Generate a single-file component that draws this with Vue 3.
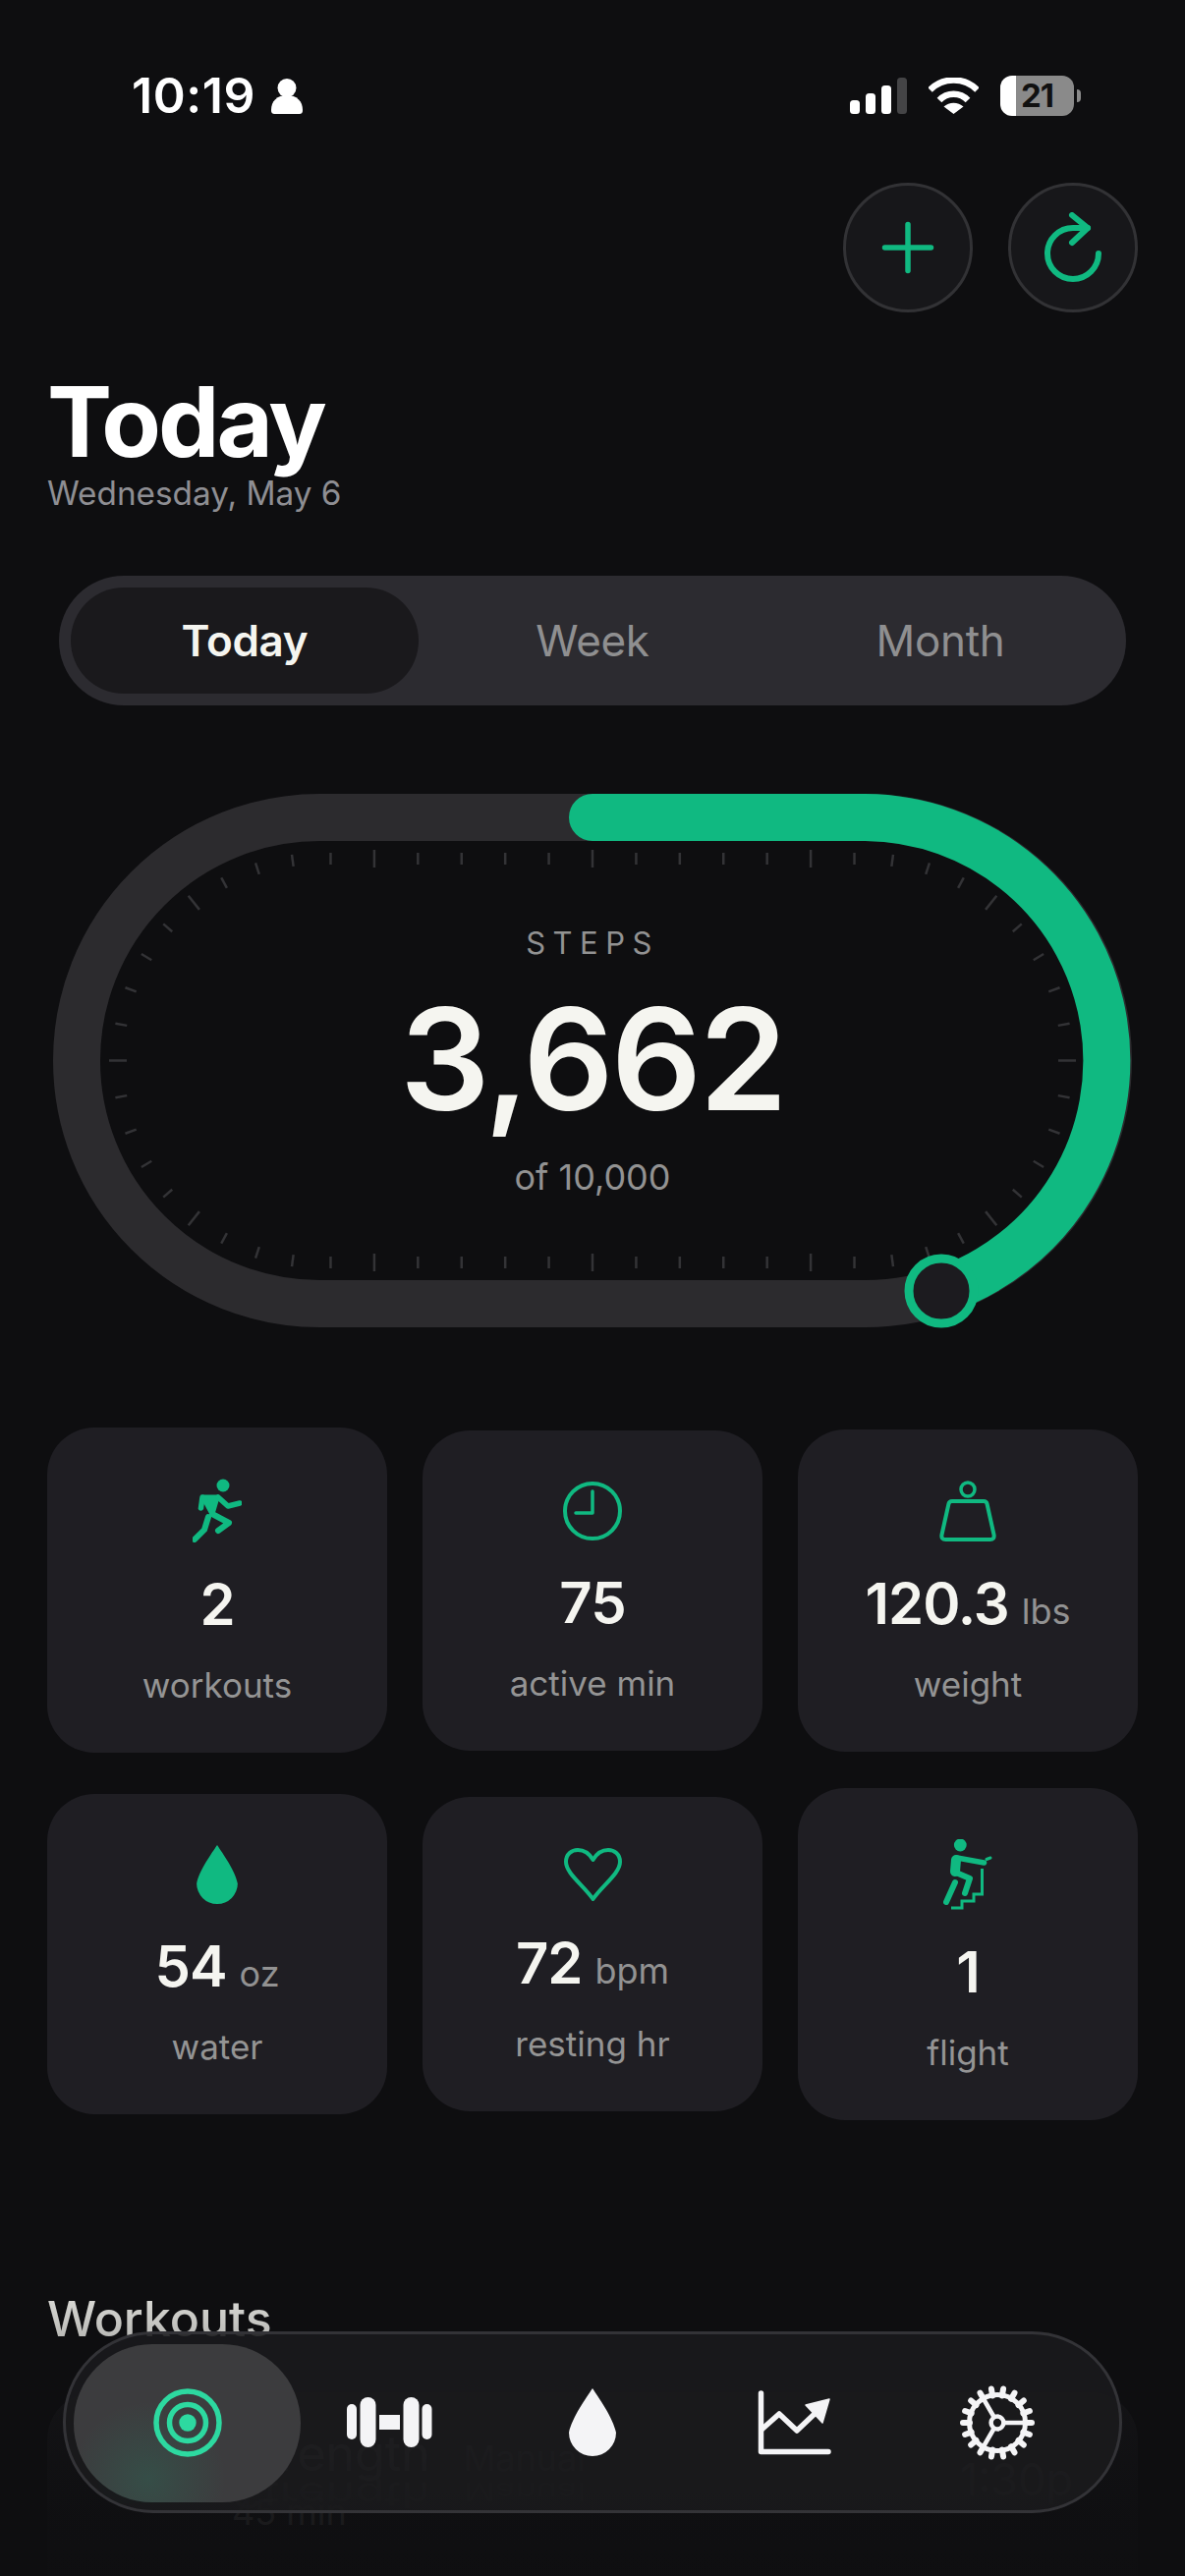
<script setup>
const ink = '#10b981'

// stat tiles; iconH differs per glyph so the tiles end up with different heights
const stats = [
  { icon: 'run', box: '36 5 50 65', w: 50, h: 65, value: '2', label: 'workouts' },
  { icon: 'clock', box: '0 0 60 60', w: 60, h: 60, value: '75', label: 'active min' },
  { icon: 'weight', box: '0 0 58 62', w: 58, h: 62, value: '120.3', unit: 'lbs', label: 'weight' },
  { icon: 'drop', box: '0 0 48 69', w: 42, h: 60, value: '54', unit: 'oz', label: 'water' },
  { icon: 'heart', box: '0 0 59 54', w: 59, h: 54, value: '72', unit: 'bpm', label: 'resting hr' },
  { icon: 'flight', box: '40 23 50 72', w: 50, h: 72, value: '1', label: 'flight' }
]

const tabs = ['Today', 'Week', 'Month']

const dropPath = 'M24 0C30 9 45 30 48 45A24 24 0 0 1 0 45C3 30 18 9 24 0Z'

// gauge is a pill: straight runs plus two half circles, 60 ticks spaced along the centre line
const cx1 = 325.5
const cx2 = 880.5
const cy = 289.5
const r = 247.5
const straight = cx2 - cx1
const perimeter = 2 * straight + 2 * Math.PI * r
const halfRun = straight / 2

function pointAt(s) {
  // s runs clockwise from the top centre
  s = s % perimeter
  if (s <= halfRun) return { x: 603 + s, y: cy - r, nx: 0, ny: 1 }
  s -= halfRun
  const arc = Math.PI * r
  if (s <= arc) {
    const a = s / r
    return { x: cx2 + r * Math.sin(a), y: cy - r * Math.cos(a), nx: -Math.sin(a), ny: Math.cos(a) }
  }
  s -= arc
  if (s <= straight) return { x: cx2 - s, y: cy + r, nx: 0, ny: -1 }
  s -= straight
  if (s <= arc) {
    const a = s / r
    return { x: cx1 - r * Math.sin(a), y: cy + r * Math.cos(a), nx: Math.sin(a), ny: -Math.cos(a) }
  }
  s -= arc
  return { x: cx1 + s, y: cy - r, nx: 0, ny: 1 }
}

const ticks = Array.from({ length: 60 }, (_, i) => {
  const p = pointAt((i * perimeter) / 60)
  const major = i % 5 === 0
  const half = major ? 9 : 6
  const mid = 42
  return {
    x1: p.x + p.nx * (mid - half),
    y1: p.y + p.ny * (mid - half),
    x2: p.x + p.nx * (mid + half),
    y2: p.y + p.ny * (mid + half),
    major
  }
})

const gearTeeth = Array.from({ length: 18 }, (_, i) => i * 20)
</script>

<template>
  <div class="page">
    <header class="status">
      <div class="status-left">
        <span class="clock">10:19</span>
        <svg width="32" height="36" viewBox="0 0 32 36">
          <circle cx="16" cy="9.5" r="9.5" fill="#fff" />
          <path d="M0 32c0-9 6-15 16-15s16 6 16 15c0 3-1 4-4 4H4c-3 0-4-1-4-4z" fill="#fff" />
        </svg>
      </div>
      <div class="status-right">
        <svg width="58" height="37" viewBox="0 0 58 37">
          <rect x="0" y="23" width="10" height="14" rx="3.5" fill="#fff" />
          <rect x="16" y="16" width="10" height="21" rx="3.5" fill="#fff" />
          <rect x="32" y="8" width="10" height="29" rx="3.5" fill="#fff" />
          <rect x="48" y="0" width="10" height="37" rx="3.5" fill="#444446" />
        </svg>
        <svg width="51" height="37" viewBox="0 0 51 37">
          <path d="M1.5 12.5A34 34 0 0 1 49.5 12.5" fill="none" stroke="#fff" stroke-width="6.5" />
          <path d="M11 23A20 20 0 0 1 40 23" fill="none" stroke="#fff" stroke-width="6.5" />
          <path d="M25.5 37L15.5 29.5A15 15 0 0 1 35.5 29.5Z" fill="#fff" />
        </svg>
        <div class="battery-wrap">
          <div class="battery">21</div>
          <span class="battery-tip"></span>
        </div>
      </div>
    </header>

    <div class="actions">
      <button class="round">
        <svg width="60" height="60" viewBox="0 0 60 60" fill="none" :stroke="ink" stroke-width="5.5" stroke-linecap="round">
          <path d="M30 6.5V53.5M6.5 30H53.5" />
        </svg>
      </button>
      <button class="round">
        <svg class="refresh" width="60" height="72" viewBox="0 0 60 72" fill="none" :stroke="ink" stroke-width="6" stroke-linecap="round" stroke-linejoin="round">
          <path d="M55 42A26 26 0 1 1 29 16H44" />
          <path d="M28 3L44 16L28 31" />
        </svg>
      </button>
    </div>

    <div class="title-block">
      <h1>Today</h1>
      <p>Wednesday, May 6</p>
    </div>

    <div class="segmented">
      <div v-for="(t, i) in tabs" :key="t" class="segment" :class="{ on: i === 0 }">{{ t }}</div>
    </div>

    <section class="gauge">
      <svg class="gauge-art" width="1206" height="580" viewBox="0 0 1206 580" fill="none">
        <rect x="78" y="42" width="1050" height="495" rx="247.5" stroke="#2c2b2e" stroke-width="48" />
        <line
          v-for="(t, i) in ticks"
          :key="i"
          :x1="t.x1"
          :y1="t.y1"
          :x2="t.x2"
          :y2="t.y2"
          stroke="#333336"
          stroke-width="2.5"
        />
        <path d="M603 42H880.5A247.5 247.5 0 0 1 958 524" :stroke="ink" stroke-width="48" stroke-linecap="round" />
        <circle cx="958" cy="524" r="33" fill="#1c1b1f" :stroke="ink" stroke-width="9" />
      </svg>
      <div class="gauge-copy">
        <div class="gauge-label">STEPS</div>
        <div class="gauge-value">3,662</div>
        <div class="gauge-goal">of 10,000</div>
      </div>
    </section>

    <section class="stats">
      <div v-for="s in stats" :key="s.label" class="stat">
        <svg :width="s.w" :height="s.h" :viewBox="s.box" fill="none" :stroke="ink" stroke-linecap="round" stroke-linejoin="round">
          <template v-if="s.icon === 'run'">
            <circle cx="67" cy="12" r="6.5" :fill="ink" stroke="none" />
            <path d="M46 24L44.5 35" stroke-width="5.5" />
            <path d="M47 24H61L56 41Z" :fill="ink" stroke-width="5" />
            <path d="M62 24L72 33L84 30" stroke-width="5.5" />
            <path d="M56 41L73 50L62 58" stroke-width="6" />
            <path d="M52 44L48 57L38 67" stroke-width="6" />
          </template>
          <template v-else-if="s.icon === 'clock'">
            <circle cx="30" cy="30" r="28" stroke-width="4" />
            <path d="M30 10V32H13" stroke-width="3.5" />
          </template>
          <template v-else-if="s.icon === 'weight'">
            <circle cx="29" cy="9" r="7" stroke-width="3.5" />
            <path d="M13 21H45Q48 21 48.6 24L55.5 55Q56.5 60 51.5 60H6.5Q1.5 60 2.5 55L9.4 24Q10 21 13 21Z" stroke-width="4" />
          </template>
          <template v-else-if="s.icon === 'drop'">
            <path :d="dropPath" :fill="ink" stroke="none" />
          </template>
          <template v-else-if="s.icon === 'heart'">
            <path d="M29.5 52C20 38 2 26 2 14C2 6 8 2 14 2C21 2 26 6 29.5 12C33 6 38 2 45 2C51 2 57 6 57 14C57 26 39 38 29.5 52Z" stroke-width="4" />
          </template>
          <template v-else>
            <circle cx="57.3" cy="29" r="6.4" :fill="ink" stroke="none" />
            <path d="M53 44L52 56" stroke-width="10" />
            <path d="M54 42L81.5 47" stroke-width="5.5" />
            <path d="M53 57L67 63L62 78" stroke-width="6" />
            <path d="M52 67L43 87" stroke-width="6" />
            <path d="M84 43.5L88 42" stroke-width="3" />
            <path d="M48 93H59V86H71V79H79.5V53" stroke-width="3" stroke-linecap="butt" stroke-linejoin="miter" />
          </template>
        </svg>
        <div class="stat-value">{{ s.value }}<span v-if="s.unit" class="stat-unit">{{ s.unit }}</span></div>
        <div class="stat-label">{{ s.label }}</div>
      </div>
    </section>

    <section class="workouts">
      <h2>Workouts</h2>
      <div class="workout">
        <div class="workout-tile"></div>
        <div class="workout-main">
          <div class="workout-name">Strength <span class="workout-kind">Manual</span></div>
          <div class="workout-ghost" aria-hidden="true">Strength <span class="workout-kind">Manual</span></div>
          <div class="workout-time">45 min</div>
        </div>
        <div class="workout-at">1:30p</div>
      </div>
    </section>

    <div class="fade"></div>

    <nav class="tabbar">
      <div class="tab active">
        <span class="tab-pill"></span>
        <svg width="70" height="70" viewBox="0 0 70 70" fill="none" stroke="#2dd9a0" stroke-width="5.5">
          <circle cx="35" cy="35" r="32" />
          <circle cx="35" cy="35" r="18.5" />
          <circle cx="35" cy="35" r="8.7" fill="#2dd9a0" stroke="none" />
        </svg>
      </div>
      <div class="tab">
        <svg width="88" height="52" viewBox="0 0 88 52" fill="#f4f4f6">
          <rect x="0" y="7" width="10" height="36" rx="5" />
          <rect x="13.5" y="0" width="16" height="51" rx="8" />
          <rect x="33" y="18" width="21" height="15" />
          <rect x="57.5" y="0" width="16" height="51" rx="8" />
          <rect x="76.5" y="7" width="10" height="36" rx="5" />
        </svg>
      </div>
      <div class="tab">
        <svg width="48" height="69" viewBox="0 0 48 69" fill="#f4f4f6">
          <path :d="dropPath" />
        </svg>
      </div>
      <div class="tab">
        <svg width="76" height="66" viewBox="31 33 76 66" fill="none" stroke="#f4f4f6" stroke-width="5.5" stroke-linejoin="round" stroke-linecap="round">
          <path d="M34.5 36V95.5H103" />
          <path d="M35 73L53 57L71 74L90 56" />
          <path d="M80 48L104 42L97 66Z" fill="#f4f4f6" stroke-width="1.5" />
        </svg>
      </div>
      <div class="tab">
        <svg width="76" height="76" viewBox="-38 -38 76 76" fill="none" stroke="#f4f4f6">
          <line
            v-for="deg in gearTeeth"
            :key="deg"
            x1="28"
            y1="0"
            x2="35"
            y2="0"
            stroke-width="6"
            stroke-linecap="round"
            :transform="`rotate(${deg})`"
          />
          <circle r="28.5" stroke-width="5" />
          <circle r="6.4" stroke-width="4.5" />
          <path d="M6.4 0H29M-3.2 -5.5L-14.5 -25M-3.2 5.5L-14.5 25" stroke-width="4.5" />
        </svg>
      </div>
    </nav>
  </div>
</template>

<style scoped>
.page {
  position: relative;
  width: 1206px;
  height: 2622px;
  overflow: hidden;
  background: #0e0e10;
  font-family: Inter, "Liberation Sans", sans-serif;
  color: #f5f5f0;
}

.status {
  display: flex;
  justify-content: space-between;
  align-items: center;
  height: 41px;
  padding: 77px 106px 0 134px;
}

.status-left {
  display: flex;
  align-items: center;
  gap: 16px;
}

.clock {
  font-size: 50px;
  line-height: 41px;
  font-weight: 600;
  letter-spacing: 0.6px;
  color: #fff;
}

.status-right {
  display: flex;
  align-items: center;
  gap: 22px;
}

.battery-wrap {
  display: flex;
  align-items: center;
  gap: 3px;
}

.battery {
  width: 75px;
  height: 41px;
  border-radius: 12px;
  background: linear-gradient(90deg, #fff 16px, #8a8a8a 16px);
  color: #111;
  font-size: 33px;
  font-weight: 700;
  line-height: 41px;
  text-align: center;
  letter-spacing: -1px;
}

.battery-tip {
  width: 4px;
  height: 13px;
  border-radius: 0 5px 5px 0;
  background: #8a8a8a;
}

.actions {
  display: flex;
  justify-content: flex-end;
  gap: 36px;
  margin-top: 68px;
  padding-right: 48px;
}

.round {
  display: flex;
  align-items: center;
  justify-content: center;
  width: 132px;
  height: 132px;
  padding: 0;
  border: 3px solid #323235;
  border-radius: 50%;
  background: #17171a;
}

.refresh {
  margin-left: 2px;
}

.title-block {
  margin-top: 61px;
  padding-left: 48px;
}

h1 {
  margin: 0;
  font-size: 99px;
  line-height: 100px;
  font-weight: 700;
  letter-spacing: -3px;
  color: #fff;
}

.title-block p {
  margin: 3px 0 0;
  font-size: 33.3px;
  line-height: 40px;
  color: #8e8e93;
}

.segmented {
  display: grid;
  grid-template-columns: repeat(3, 1fr);
  margin: 64px 60px 0;
  padding: 12px;
  border-radius: 66px;
  background: #2c2b30;
}

.segment {
  height: 108px;
  border-radius: 54px;
  font-size: 44px;
  line-height: 108px;
  text-align: center;
  letter-spacing: -0.3px;
  color: #8f8f90;
}

.segment.on {
  background: #1a191c;
  font-weight: 600;
  color: #f5f5f0;
}

.gauge {
  display: grid;
  margin-top: 72px;
}

.gauge-art,
.gauge-copy {
  grid-area: 1 / 1;
}

.gauge-art {
  display: block;
}

.gauge-copy {
  display: flex;
  flex-direction: column;
  align-items: center;
  padding-top: 150px;
}

.gauge-label {
  font-size: 31px;
  line-height: 40px;
  letter-spacing: 7.5px;
  color: #929292;
}

.gauge-value {
  margin-top: 23px;
  font-size: 144px;
  line-height: 150px;
  font-weight: 600;
  letter-spacing: -2.5px;
}

.gauge-goal {
  margin-top: 23px;
  font-size: 36px;
  line-height: 44px;
  color: #929292;
}

.stats {
  display: grid;
  grid-template-columns: repeat(3, 1fr);
  gap: 36px;
  align-items: center;
  margin-top: 83px;
  padding: 0 48px;
}

.stat {
  display: flex;
  flex-direction: column;
  align-items: center;
  padding: 52px 0 47px;
  border-radius: 48px;
  background: #1f1e23;
}

.stat svg {
  display: block;
}

.stat-value {
  margin-top: 28px;
  font-size: 58px;
  line-height: 70px;
  font-weight: 600;
  letter-spacing: -1px;
}

.stat-unit {
  margin-left: 13px;
  font-size: 36px;
  line-height: 0;
  font-weight: 400;
  letter-spacing: 0;
  color: #929292;
}

.stat-label {
  margin-top: 25px;
  font-size: 35px;
  line-height: 44px;
  color: #949494;
}

.workouts {
  margin-top: 172px;
  padding: 0 48px;
}

h2 {
  margin: 0;
  font-size: 50px;
  line-height: 60px;
  font-weight: 500;
}

.workout {
  display: flex;
  gap: 46px;
  height: 300px;
  margin-top: 45px;
  padding: 37px 66px 0 52px;
  border-radius: 48px;
  background: #17171a;
}

.workout-tile {
  flex: none;
  width: 90px;
  height: 76px;
  border-radius: 24px;
  background: rgba(16, 185, 129, 0.3);
}

.workout-main {
  position: relative;
  flex: 1;
}

.workout-name,
.workout-ghost {
  font-size: 50px;
  line-height: 50px;
  color: #777;
}

.workout-ghost {
  position: absolute;
  top: 38px;
  left: 0;
  transform: scaleY(-0.7);
  opacity: 0.7;
}

.workout-kind {
  margin-left: 20px;
  font-size: 36px;
  color: #555;
}

.workout-time {
  margin-top: 8px;
  font-size: 36px;
  line-height: 44px;
  color: #666;
}

.workout-at {
  margin-top: 22px;
  font-size: 45px;
  line-height: 60px;
  color: #666;
}

.fade {
  position: absolute;
  left: 0;
  right: 0;
  bottom: 0;
  height: 320px;
  background: linear-gradient(rgba(14, 14, 16, 0), rgba(14, 14, 16, 0.85) 80%, rgba(14, 14, 16, 0.92));
}

.tabbar {
  position: absolute;
  left: 64px;
  bottom: 64px;
  display: grid;
  grid-template-columns: repeat(5, 206px);
  align-items: center;
  box-sizing: border-box;
  width: 1078px;
  height: 185px;
  padding: 0 21px;
  border: 3px solid #333337;
  border-radius: 92px;
  background: rgba(26, 26, 29, 0.88);
}

.tab {
  position: relative;
  display: flex;
  align-items: center;
  justify-content: center;
  height: 100%;
}

.tab svg {
  position: relative;
}

.tab-pill {
  position: absolute;
  top: 10px;
  bottom: 8px;
  left: -13px;
  right: -12px;
  border-radius: 80px;
  background:
    radial-gradient(circle at 33% 85%, rgba(16, 185, 129, 0.14), rgba(16, 185, 129, 0) 38%),
    #3c3c3e;
}
</style>

<style>
html,
body {
  margin: 0;
  background: #0e0e10;
}
</style>
